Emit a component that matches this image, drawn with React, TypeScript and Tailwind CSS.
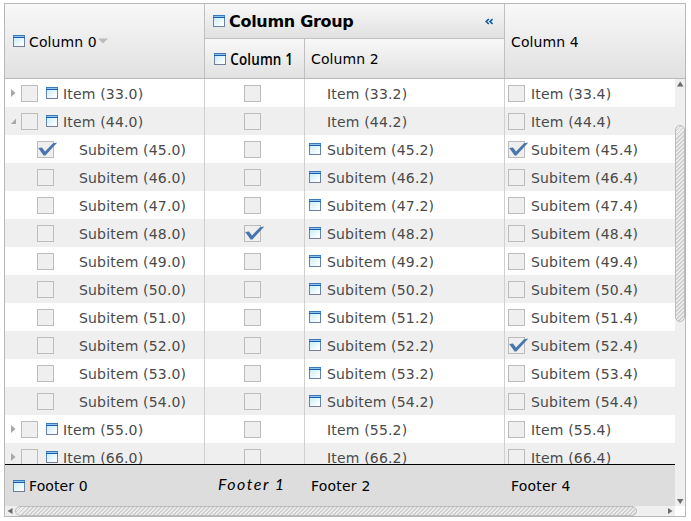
import type { ReactNode } from 'react';

type RowData = { n: number; sub: boolean; open?: boolean; checks?: number[] };

const rows: RowData[] = [
  { n: 33, sub: false },
  { n: 44, sub: false, open: true },
  { n: 45, sub: true, checks: [0, 4] },
  { n: 46, sub: true },
  { n: 47, sub: true },
  { n: 48, sub: true, checks: [1] },
  { n: 49, sub: true },
  { n: 50, sub: true },
  { n: 51, sub: true },
  { n: 52, sub: true, checks: [4] },
  { n: 53, sub: true },
  { n: 54, sub: true },
  { n: 55, sub: false },
  { n: 66, sub: false },
];

function WindowIcon() {
  return (
    <svg width="12" height="12" viewBox="0 0 12 12" className="block shrink-0">
      <defs>
        <linearGradient id="pane" x1="0" y1="0" x2="1" y2="1">
          <stop offset="0" stopColor="#c9edfa" />
          <stop offset="0.8" stopColor="#f8fdff" />
          <stop offset="1" stopColor="#fff" />
        </linearGradient>
        <linearGradient id="edge" x1="0" y1="0" x2="0" y2="1">
          <stop offset="0" stopColor="#4a90c8" />
          <stop offset="1" stopColor="#757c98" />
        </linearGradient>
      </defs>
      <path fill="url(#edge)" d="M0 0h12v12H0z" />
      <path fill="url(#pane)" d="M1 3h10v8H1z" />
      <path fill="#3a78b8" d="M0 0h12v1H0z" />
      <path fill="#1f5da8" d="M0 2h12v1H0z" />
      <path fill="#8cc4f0" d="M1 1h10v1H1z" />
    </svg>
  );
}

function Box({ checked }: { checked?: boolean }) {
  return (
    <span className="relative block size-[17px] shrink-0 border border-[#bcbcbc] bg-[#efefef]">
      {checked && (
        <svg width="20" height="16" viewBox="0 0 20 16" className="absolute left-0 top-0">
          <path fill="#4a76ae" d="M0.2 6 L4 5.6 L7 9.4 L15 1.2 L19.3 0.4 L7.4 13.4 L5.6 13.4 Z" />
        </svg>
      )}
    </span>
  );
}

function Twisty({ open }: { open?: boolean }) {
  return (
    <svg width="6" height="8" viewBox="0 0 6 8" className="block shrink-0">
      {open ? <path fill="#a8a8a8" d="M5 1.5V7H0z" /> : <path fill="#a8a8a8" d="M0 0L4.5 4L0 8z" />}
    </svg>
  );
}

function Label({ row, col }: { row: RowData; col: number }) {
  return (
    <span className="whitespace-pre pt-[2px] tracking-[0.17px] text-[#4a4a4a]">
      {row.sub ? 'Subitem' : 'Item'} ({row.n}.{col})
    </span>
  );
}

function Row({ row, odd }: { row: RowData; odd: boolean }) {
  const on = (c: number) => row.checks?.includes(c);
  return (
    <div className={`flex h-7 shrink-0 ${odd ? 'bg-[#efefef]' : 'bg-white'}`}>
      <div className="flex w-[200px] items-center border-r border-[#d0d0d0]">
        {row.sub ? (
          <div className="flex items-center pl-8">
            <Box checked={on(0)} />
            <span className="w-[25px]" />
          </div>
        ) : (
          <div className="flex items-center pl-[6px]">
            <Twisty open={row.open} />
            <span className="w-1" />
            <Box />
            <span className="w-2" />
            <WindowIcon />
            <span className="w-[5px]" />
          </div>
        )}
        <Label row={row} col={0} />
      </div>
      <div className="flex w-[100px] items-center border-r border-[#d0d0d0] pl-[39px]">
        <Box checked={on(1)} />
      </div>
      <div className="flex w-[200px] items-center border-r border-[#d0d0d0] pl-1">
        <div className="w-[18px]">{row.sub && <WindowIcon />}</div>
        <Label row={row} col={2} />
      </div>
      <div className="flex w-[170px] items-center gap-[6px] pl-[3px]">
        <Box checked={on(4)} />
        <Label row={row} col={4} />
      </div>
    </div>
  );
}

function Head({ className, children }: { className: string; children: ReactNode }) {
  return <div className={`flex items-center whitespace-pre border-[#c0c0c0] bg-linear-to-b from-[#f8f8f8] to-[#e1e1e1] ${className}`}>{children}</div>;
}

function Arrow({ d }: { d: string }) {
  return (
    <svg width="10" height="10" viewBox="0 0 10 10" className="block shrink-0">
      <path fill="#6c6c6c" d={d} />
    </svg>
  );
}

const hatch = 'border border-[#bcbcbc] rounded-[5px] bg-[repeating-linear-gradient(135deg,#cfcfcf_0px,#cfcfcf_1.41px,#ececec_1.41px,#ececec_2.83px)]';

export default function App() {
  return (
    <div className="h-[521px] w-[691px] overflow-hidden bg-white pl-1 pt-[3px] font-['DejaVu_Sans',sans-serif] text-[14px] leading-[18px] text-black">
      <div className="flex h-[514px] w-[682px] flex-col border border-[#b8b8b8]">
        <div className="flex h-[75px] shrink-0 border-b border-[#b8b8b8]">
          <Head className="w-[200px] border-r pl-2">
            <WindowIcon />
            <span className="pl-1 pt-[2px] tracking-[0.1px]">Column 0</span>
            <svg width="10" height="6" viewBox="0 0 10 6" className="ml-px"><path fill="#bcbcbc" d="M0 .5h10L5 5.5z" /></svg>
          </Head>
          <div className="w-[300px]">
            <Head className="h-[35px] border-b border-r pl-2 pr-[11px] text-[16px] font-bold">
              <WindowIcon />
              <span className="grow pl-1 pt-px tracking-[-0.3px]">Column Group</span>
              <svg width="8" height="7" viewBox="0 0 8 7"><path fill="none" stroke="#0b5aa5" strokeWidth="1.6" d="M3.8 1L1.2 3.5L3.8 6M7.6 1L5 3.5L7.6 6" /></svg>
            </Head>
            <div className="flex h-[39px]">
              <Head className="w-[100px] border-r pl-[9px]">
                <WindowIcon />
                <span className="origin-left scale-x-[0.84] pl-[5px] font-['Open_Sans',sans-serif] text-[16px] font-semibold tracking-[0.2px]">Column 1</span>
              </Head>
              <Head className="w-[200px] border-r pl-[6px]"><span className="tracking-[0.1px]">Column 2</span></Head>
            </div>
          </div>
          <Head className="w-[180px] pl-[6px]"><span className="pt-[2px] tracking-[0.1px]">Column 4</span></Head>
        </div>
        <div className="flex min-h-0 grow">
          <div className="flex w-[670px] flex-col">
            <div className="flex h-[385px] shrink-0 flex-col overflow-hidden">
              {rows.map((row, i) => <Row key={row.n} row={row} odd={i % 2 === 1} />)}
            </div>
            <div className="flex h-[42px] shrink-0 items-center whitespace-pre border-t border-black bg-[#ddd]">
              <div className="flex w-[200px] items-center pl-2"><WindowIcon /><span className="pl-1 pt-px tracking-[0.1px]">Footer 0</span></div>
              <div className="w-[100px] pl-[13px] pb-[3px] font-['Lato',sans-serif] text-[16px] italic tracking-[1.5px]">Footer 1</div>
              <div className="w-[200px] pl-[6px] pt-px tracking-[0.2px]">Footer 2</div>
              <div className="pl-[6px] pt-px tracking-[0.2px]">Footer 4</div>
            </div>
            <div className="flex h-[10px] shrink-0 bg-[#efefef]">
              <Arrow d="M7.5 2v6L2.5 5z" />
              <div className={`h-[10px] w-[622px] ${hatch}`} />
              <span className="grow" />
              <Arrow d="M3 2v6l4.5-3z" />
            </div>
          </div>
          <div className="flex w-[10px] flex-col">
            <div className="flex h-[427px] flex-col bg-[#efefef]">
              <Arrow d="M2 7.5h6.5L5.2 2.5z" />
              <div className={`mt-9 h-[197px] w-[10px] ${hatch}`} />
              <span className="grow" />
              <Arrow d="M2 3h6.5L5.2 8z" />
            </div>
          </div>
        </div>
      </div>
    </div>
  );
}
